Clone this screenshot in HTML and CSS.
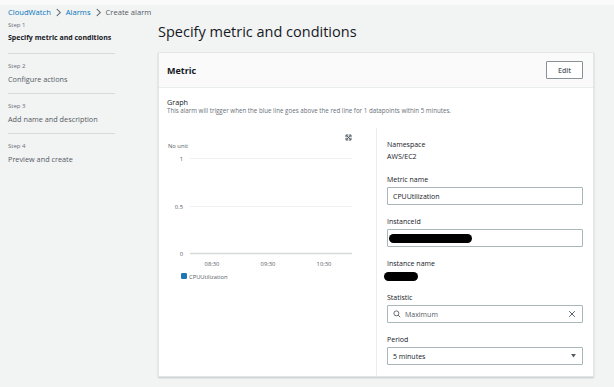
FILE: index.html
```html
<!DOCTYPE html>
<html>
<head>
<meta charset="utf-8">
<link rel="stylesheet" href="styles.css">
</head>
<body>
<div class="topstrip"></div>
<div class="page">
  <nav class="crumbs">
    <a class="crumb-link">CloudWatch</a>
    <svg class="chev" viewBox="0 0 8 10" width="7" height="9"><path d="M2 1 L6 5 L2 9" fill="none" stroke="#545b64" stroke-width="1.2"/></svg>
    <a class="crumb-link">Alarms</a>
    <svg class="chev" viewBox="0 0 8 10" width="7" height="9"><path d="M2 1 L6 5 L2 9" fill="none" stroke="#545b64" stroke-width="1.2"/></svg>
    <span class="crumb-current">Create alarm</span>
  </nav>
  <div class="layout">
    <aside class="steps">
      <div class="step">
        <div class="step-num">Step 1</div>
        <div class="step-title active">Specify metric and conditions</div>
      </div>
      <div class="step">
        <div class="step-num">Step 2</div>
        <div class="step-title">Configure actions</div>
      </div>
      <div class="step">
        <div class="step-num">Step 3</div>
        <div class="step-title">Add name and description</div>
      </div>
      <div class="step last">
        <div class="step-num">Step 4</div>
        <div class="step-title">Preview and create</div>
      </div>
    </aside>
    <main class="main">
      <h1 class="title">Specify metric and conditions</h1>
      <section class="card">
        <header class="card-head">
          <h2 class="card-title">Metric</h2>
          <button class="btn">Edit</button>
        </header>
        <div class="card-body">
          <div class="graph-head">
            <div class="graph-title">Graph</div>
            <div class="graph-desc">This alarm will trigger when the blue line goes above the red line for 1 datapoints within 5 minutes.</div>
          </div>
          <div class="cols">
            <div class="chart-col">
              <svg class="chart" width="209" height="160" viewBox="0 0 209 160">
                <g transform="translate(178,6)" fill="none" stroke="#545b64" stroke-width="0.9">
                  <rect x="0.5" y="0.5" width="6" height="6" fill="#879196" stroke="none" opacity="0.35"/>
                  <path d="M1 3 V1 H3 M4 1 H6 V3 M6 4 V6 H4 M3 6 H1 V4"/>
                  <path d="M1.5 1.5 L5.5 5.5 M5.5 1.5 L1.5 5.5"/>
                </g>
                <text x="1" y="19.5" class="ax">No unit</text>
                <text x="16" y="32.5" class="ax" text-anchor="end">1</text>
                <text x="16" y="80.5" class="ax" text-anchor="end">0.5</text>
                <text x="16" y="127.5" class="ax" text-anchor="end">0</text>
                <line x1="23" y1="30.5" x2="185" y2="30.5" stroke="#eaeded" stroke-width="0.8"/>
                <line x1="23" y1="78.5" x2="185" y2="78.5" stroke="#eaeded" stroke-width="0.8"/>
                <line x1="23" y1="125.5" x2="185" y2="125.5" stroke="#d5dbdb" stroke-width="1.4"/>
                <text x="45" y="138" class="ax" text-anchor="middle">08:30</text>
                <text x="101" y="138" class="ax" text-anchor="middle">09:30</text>
                <text x="157" y="138" class="ax" text-anchor="middle">10:30</text>
                <rect x="14" y="145" width="6" height="6" rx="1.2" fill="#1f77b4"/>
                <text x="22" y="150.5" class="ax">CPUUtilization</text>
              </svg>
            </div>
            <div class="form-col">
              <div class="field">
                <div class="label">Namespace</div>
                <div class="value">AWS/EC2</div>
              </div>
              <div class="field">
                <div class="label">Metric name</div>
                <div class="input">CPUUtilization</div>
              </div>
              <div class="field">
                <div class="label">InstanceId</div>
                <div class="input"><span class="redact redact-long"></span></div>
              </div>
              <div class="field">
                <div class="label">Instance name</div>
                <div class="value value-redacted"><span class="redact redact-short"></span></div>
              </div>
              <div class="field">
                <div class="label">Statistic</div>
                <div class="input input-search">
                  <svg class="ico" width="8" height="8" viewBox="0 0 10 10"><circle cx="4.2" cy="4.2" r="3.1" fill="none" stroke="#545b64" stroke-width="1.1"/><path d="M6.5 6.5 L9 9" stroke="#545b64" stroke-width="1.2"/></svg>
                  <span class="grow">Maximum</span>
                  <svg class="ico" width="8" height="8" viewBox="0 0 10 10"><path d="M1.5 1.5 L8.5 8.5 M8.5 1.5 L1.5 8.5" stroke="#545b64" stroke-width="1.2"/></svg>
                </div>
              </div>
              <div class="field">
                <div class="label">Period</div>
                <div class="input input-select">
                  <span class="grow">5 minutes</span>
                  <svg class="ico" width="5" height="4" viewBox="0 0 6 5"><path d="M0 0 H6 L3 4.5 Z" fill="#545b64"/></svg>
                </div>
              </div>
            </div>
          </div>
        </div>
      </section>
    </main>
  </div>
</div>
</body>
</html>
```
FILE: styles.css
```css
* { box-sizing: border-box; }
html, body { margin: 0; padding: 0; }
body {
  background: #f2f3f3;
  font-family: "Open Sans", "Noto Sans", sans-serif;
  color: #16191f;
  width: 614px;
  height: 387px;
  overflow: hidden;
}
.topstrip { height: 5px; background: #fafafa; }
.page { padding: 0 0 0 8px; }
.crumbs {
  display: flex;
  align-items: center;
  gap: 4px;
  height: 14px;
  font-size: 7.6px;
}
.crumb-link { color: #0073bb; }
.crumb-current { color: #545b64; }
.chev { display: block; }
.layout {
  display: flex;
  gap: 43px;
}
.steps { width: 107px; flex: none; }
.step {
  border-bottom: 1px solid #d5dbdb;
  height: 40px;
  padding-top: 6px;
}
.step:first-child { height: 35px; padding-top: 0; }
.step.last { border-bottom: none; }
.step-num { font-size: 6px; color: #687078; height: 13px; line-height: 13px; }
.step-title { font-size: 7.3px; color: #545b64; line-height: 12px; white-space: nowrap; }
.step-title.active { font-weight: 700; color: #16191f; font-size: 7px; }
.main { width: 436px; flex: none; }
.title {
  margin: 0;
  font-weight: 400;
  font-size: 14.5px;
  line-height: 20px;
  height: 33px;
  padding-top: 3px;
  white-space: nowrap;
}
.card {
  background: #fff;
  border: 1px solid #e3e6e6;
  box-shadow: 0 1px 1.5px rgba(0, 28, 36, 0.2);
  height: 325px;
}
.card-head {
  display: flex;
  align-items: center;
  justify-content: space-between;
  height: 35px;
  padding: 0 10px 0 8px;
  background: #fafafa;
  border-bottom: 1px solid #eaeded;
}
.card-title { margin: 0; font-size: 9px; font-weight: 700; }
.btn {
  width: 37px;
  height: 18px;
  background: #fff;
  border: 1px solid #879196;
  border-radius: 1px;
  font-family: inherit;
  font-size: 7px;
  font-weight: 600;
  color: #545b64;
  padding: 0;
}
.card-body { padding: 9px 10px 0 8px; }
.graph-head { height: 30px; }
.graph-title { font-size: 7.2px; line-height: 10px; }
.graph-desc { font-size: 6.2px; color: #687078; line-height: 8px; white-space: nowrap; }
.cols { display: flex; height: 249px; }
.chart-col {
  width: 210px;
  flex: none;
  border-right: 1px solid #eaeded;
  margin-top: 1px;
}
.chart { display: block; }
.ax { font-size: 5.8px; fill: #545b64; font-family: "Open Sans", "Noto Sans", sans-serif; }
.form-col {
  flex: 1;
  padding: 13px 0 0 10px;
  display: flex;
  flex-direction: column;
  gap: 12px;
}
.field { display: flex; flex-direction: column; }
.label { font-size: 7px; line-height: 10px; color: #16191f; margin-bottom: 2px; }
.value { font-size: 7px; line-height: 10px; color: #16191f; height: 11px; }
.value-redacted { height: 10px; }
.input {
  height: 18px;
  border: 1px solid #aab7b8;
  border-radius: 1px;
  display: flex;
  align-items: center;
  padding: 0 6px 0 5px;
  font-size: 7px;
  color: #16191f;
  gap: 4px;
}
.input-search .grow { color: #545b64; }
.grow { flex: 1; }
.ico { display: block; flex: none; }
.redact { display: block; background: #000; border-radius: 5px; }
.redact-long { width: 83px; height: 9px; margin-left: -4px; }
.redact-short { width: 34px; height: 9px; margin-left: -3px; margin-top: 1px; }
```
